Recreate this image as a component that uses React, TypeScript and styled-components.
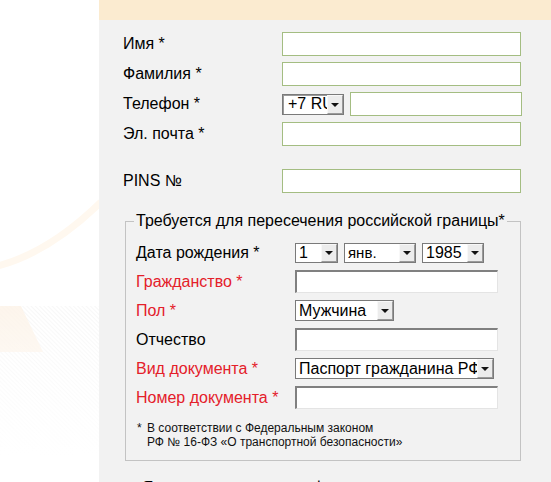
import React from 'react';
import styled, { createGlobalStyle } from 'styled-components';

const GlobalStyle = createGlobalStyle`
  html, body {
    margin: 0;
    padding: 0;
    background: #fff;
  }
  body {
    font-family: "Liberation Sans", Arial, sans-serif;
    color: #000;
  }
`;

const Page = styled.div`
  display: flex;
  width: 551px;
  height: 482px;
  overflow: hidden;
`;

const Decor = styled.aside`
  flex: 0 0 99px;
  background: #fff;

  svg {
    display: block;
  }
`;

const Panel = styled.main`
  flex: 1;
  min-width: 0;
  background: #f2f2f2;
`;

const TopBand = styled.div`
  height: 20px;
  background: #fbebd0;
`;

const Contacts = styled.div`
  display: flex;
  flex-direction: column;
  gap: 6px;
  padding: 12px 0 0 24px;
`;

const Row = styled.div<{ $h?: number; $extra?: number }>`
  display: flex;
  align-items: center;
  height: ${(p) => p.$h ?? 24}px;
  margin-top: ${(p) => p.$extra ?? 0}px;
`;

const Label = styled.label<{ $red?: boolean }>`
  flex: 0 0 159px;
  font-size: 16px;
  line-height: 18px;
  color: ${(p) => (p.$red ? '#e4202a' : '#000')};
  white-space: nowrap;
`;

const GreenInput = styled.input<{ $w: number }>`
  box-sizing: border-box;
  width: ${(p) => p.$w}px;
  height: 24px;
  margin: 0;
  padding: 0 4px;
  border: 1px solid #a4bd82;
  background: #fff;
  font: 15px "Liberation Sans", Arial, sans-serif;
  outline: none;
`;

const InsetInput = styled.input`
  box-sizing: border-box;
  width: 203px;
  height: 23px;
  margin: 0;
  padding: 0 3px;
  background: #fff;
  border-top: 2px solid #808080;
  border-left: 2px solid #808080;
  border-right: 1px solid #e4e4e4;
  border-bottom: 1px solid #e4e4e4;
  font: 15px "Liberation Sans", Arial, sans-serif;
  outline: none;
`;

const SelectBox = styled.div<{ $w: number; $h: number; $heavy?: boolean }>`
  box-sizing: border-box;
  display: flex;
  width: ${(p) => p.$w}px;
  height: ${(p) => p.$h}px;
  background: #fff;
  border: 1px solid #7a7a7a;
  box-shadow: ${(p) => (p.$heavy ? 'inset 1px 1px 0 #9a9a9a' : 'none')};
  overflow: hidden;
`;

const SelectValue = styled.span<{ $size?: number; $pad?: number }>`
  flex: 1;
  min-width: 0;
  padding-left: ${(p) => p.$pad ?? 3}px;
  font-size: ${(p) => p.$size ?? 16}px;
  line-height: ${(p) => p.$size ?? 16}px;
  align-self: center;
  white-space: nowrap;
  overflow: hidden;
`;

const ArrowButton = styled.span`
  flex: 0 0 16px;
  display: flex;
  align-items: center;
  justify-content: center;
  background: #ececec;
  border-left: 1px solid #f8f8f8;
  border-top: 1px solid #f8f8f8;
  border-right: 1px solid #9a9a9a;
  border-bottom: 1px solid #9a9a9a;
  box-sizing: border-box;

  &::after {
    content: '';
    border-left: 4px solid transparent;
    border-right: 4px solid transparent;
    border-top: 4px solid #111;
    margin-top: 1px;
  }
`;

const Controls = styled.div<{ $gap: number }>`
  display: flex;
  align-items: center;
  gap: ${(p) => p.$gap}px;
`;

const Border = styled.fieldset`
  box-sizing: border-box;
  width: 396px;
  margin: 19px 0 0 26px;
  padding: 11px 0 11px 10px;
  border: 1px solid #c3c3c3;
  min-width: 0;
`;

const Legend = styled.legend`
  margin-left: -2px;
  padding: 0 2px;
  font-size: 16px;
  line-height: 18px;
`;

const TravelRows = styled.div`
  display: flex;
  flex-direction: column;
  gap: 6px;
`;

const Footnote = styled.div`
  display: flex;
  margin-top: 12px;
  padding-left: 1px;
  font-size: 12px;
  line-height: 14px;
  color: #111;
`;

const Star = styled.span`
  flex: 0 0 10px;
`;

const Agreement = styled.p`
  margin: 18px 0 0 43px;
  font-size: 16px;
  line-height: 18px;
`;

type SelectProps = {
  value: string;
  w: number;
  h: number;
  size?: number;
  pad?: number;
  heavy?: boolean;
};

const Select = ({ value, w, h, size, pad, heavy }: SelectProps) => (
  <SelectBox $w={w} $h={h} $heavy={heavy} role="combobox">
    <SelectValue $size={size} $pad={pad}>{value}</SelectValue>
    <ArrowButton />
  </SelectBox>
);

const Decoration = () => (
  <svg width="99" height="482" viewBox="0 0 99 482">
    <defs>
      <pattern
        id="hatch"
        width="3"
        height="3"
        patternUnits="userSpaceOnUse"
        patternTransform="rotate(-45)"
      >
        <line x1="0" y1="0" x2="0" y2="3" stroke="#efefef" strokeWidth="1" />
      </pattern>
      <linearGradient id="fade" x1="0" y1="0" x2="0" y2="1">
        <stop offset="0" stopColor="#fff" stopOpacity="0" />
        <stop offset="1" stopColor="#fff" stopOpacity="1" />
      </linearGradient>
    </defs>
    <path d="M -2 266 Q 50 252 101 202" stroke="#fff8ef" strokeWidth="7" fill="none" />
    <rect x="0" y="306" width="99" height="152" fill="url(#hatch)" />
    <polygon points="0,306 21,306 43,352 0,352" fill="#fdf3e7" opacity="0.8" />
    <rect x="0" y="306" width="99" height="152" fill="url(#fade)" />
  </svg>
);

export default function App() {
  return (
    <>
      <GlobalStyle />
      <Page>
        <Decor>
          <Decoration />
        </Decor>
        <Panel>
          <TopBand />
          <Contacts>
            <Row>
              <Label>Имя *</Label>
              <GreenInput $w={239} />
            </Row>
            <Row>
              <Label>Фамилия *</Label>
              <GreenInput $w={239} />
            </Row>
            <Row>
              <Label>Телефон *</Label>
              <Controls $gap={6}>
                <Select value="+7 RU" w={62} h={21} pad={5} heavy />
                <GreenInput $w={172} />
              </Controls>
            </Row>
            <Row>
              <Label>Эл. почта *</Label>
              <GreenInput $w={239} />
            </Row>
            <Row $extra={17}>
              <Label>PINS №</Label>
              <GreenInput $w={239} />
            </Row>
          </Contacts>

          <Border>
            <Legend>Требуется для пересечения российской границы*</Legend>
            <TravelRows>
              <Row $h={23}>
                <Label>Дата рождения *</Label>
                <Controls $gap={6}>
                  <Select value="1" w={43} h={20} />
                  <Select value="янв." w={72} h={20} size={15} />
                  <Select value="1985" w={62} h={20} />
                </Controls>
              </Row>
              <Row $h={23}>
                <Label $red>Гражданство *</Label>
                <InsetInput />
              </Row>
              <Row $h={23}>
                <Label $red>Пол *</Label>
                <Select value="Мужчина" w={99} h={21} />
              </Row>
              <Row $h={23}>
                <Label>Отчество</Label>
                <InsetInput />
              </Row>
              <Row $h={23}>
                <Label $red>Вид документа *</Label>
                <Select value="Паспорт гражданина РФ" w={199} h={21} />
              </Row>
              <Row $h={23}>
                <Label $red>Номер документа *</Label>
                <InsetInput />
              </Row>
            </TravelRows>
            <Footnote>
              <Star>*</Star>
              <span>
                В соответствии с Федеральным законом
                <br />
                РФ № 16-ФЗ «О транспортной безопасности»
              </span>
            </Footnote>
          </Border>

          <Agreement>Я принимаю условия оферты</Agreement>
        </Panel>
      </Page>
    </>
  );
}
